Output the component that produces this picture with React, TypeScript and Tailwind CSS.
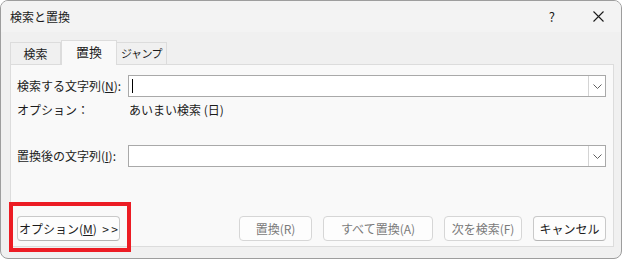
import React from "react";

const font = { fontFamily: '"Noto Sans CJK JP", "Noto Sans", sans-serif' };

function Chevron() {
  return (
    <svg width="9" height="5" viewBox="0 0 9 5" className="text-[#606060]">
      <path d="M0.5 0.5 L4.5 4.5 L8.5 0.5" fill="none" stroke="currentColor" strokeWidth="1" />
    </svg>
  );
}

function Combo({ caret }: { caret?: boolean }) {
  return (
    <div className="relative flex h-[22px] w-[478px] items-center border border-[#a9a9a9] bg-white">
      {caret ? <span className="ml-[3px] h-[14px] w-px bg-black" /> : null}
      <div className="absolute right-0 top-0 flex h-[20px] w-[17px] items-center justify-center border-l border-[#d4d4d4] bg-white">
        <Chevron />
      </div>
    </div>
  );
}

function Btn({
  children,
  width,
  disabled,
}: {
  children: React.ReactNode;
  width: string;
  disabled?: boolean;
}) {
  return (
    <div
      className={`flex h-[25px] ${width} items-center justify-center rounded-[4px] border bg-[#fdfdfd] text-[12px] ${
        disabled ? "border-[#d6d6d6] text-[#7a7a7a]" : "border-[#c9c9c9] border-b-[#b5b5b5] text-[#1b1b1b]"
      }`}
    >
      {children}
    </div>
  );
}

export default function App() {
  return (
    <div className="h-[262px] w-[624px] bg-white" style={font}>
      <div className="relative flex h-[259px] w-[622px] flex-col overflow-hidden rounded-[8px] border border-[#9d9d9d] bg-[#f0f0f0] text-[#1b1b1b]">
        {/* title bar */}
        <div className="flex h-[31px] items-center bg-[#f3f3f3] pl-[9px] text-[12px]">
          <span>検索と置換</span>
          <span className="ml-auto mr-[38px] text-[13px]">?</span>
          <svg width="11" height="11" viewBox="0 0 11 11" className="mr-[17px]">
            <path d="M0.5 0.5 L10.5 10.5 M10.5 0.5 L0.5 10.5" stroke="#1b1b1b" strokeWidth="1.1" />
          </svg>
        </div>

        {/* tabs */}
        <div className="flex h-[32px] items-end pl-[9px] text-[12px]">
          <div className="flex h-[22px] w-[51px] items-center justify-center border border-b-0 border-[#dcdcdc] bg-[#f0f0f0]">
            検索
          </div>
          <div className="relative z-10 -mb-px flex h-[25px] w-[56px] items-center justify-center border border-b-0 border-[#dcdcdc] bg-[#f9f9f9] pb-[2px] text-[13px]">
            置換
          </div>
          <div className="flex h-[22px] w-[50px] items-center justify-center border border-b-0 border-l-0 border-[#dcdcdc] bg-[#f0f0f0] text-[11px] tracking-[-0.5px]">
            ジャンプ
          </div>
        </div>

        {/* panel */}
        <div className="ml-[9px] flex h-[183px] w-[604px] flex-col border border-[#dcdcdc] bg-[#f9f9f9] pt-[10px] text-[12px]">
          <div className="flex items-center">
            <span className="w-[117px] pl-[6px]">
              検索する文字列(<span className="underline">N</span>):
            </span>
            <Combo caret />
          </div>
          <div className="mt-[3px] flex h-[20px] items-center">
            <span className="w-[118px] pl-[6px]">オプション：</span>
            <span>あいまい検索 (日)</span>
          </div>
          <div className="mt-[25px] flex items-center">
            <span className="w-[117px] pl-[6px]">
              置換後の文字列(<span className="underline">I</span>):
            </span>
            <Combo />
          </div>

          <div className="mt-auto mb-[5px] flex items-center pl-[6px]">
            <Btn width="w-[103px]">
              <span>
                オプション(<span className="underline">M</span>)&nbsp;&nbsp;&gt;&thinsp;&gt;
              </span>
            </Btn>
            <div className="ml-auto flex gap-[11px] pr-[7px]">
              <Btn width="w-[73px]" disabled>
                置換(R)
              </Btn>
              <Btn width="w-[110px]" disabled>
                すべて置換(A)
              </Btn>
              <Btn width="w-[78px]" disabled>
                次を検索(F)
              </Btn>
              <Btn width="w-[73px]">キャンセル</Btn>
            </div>
          </div>
        </div>

        {/* highlight annotation */}
        <div className="absolute left-[8px] top-[201px] h-[50px] w-[122px] border-[4px] border-[#ec1c24]" />
      </div>
    </div>
  );
}
